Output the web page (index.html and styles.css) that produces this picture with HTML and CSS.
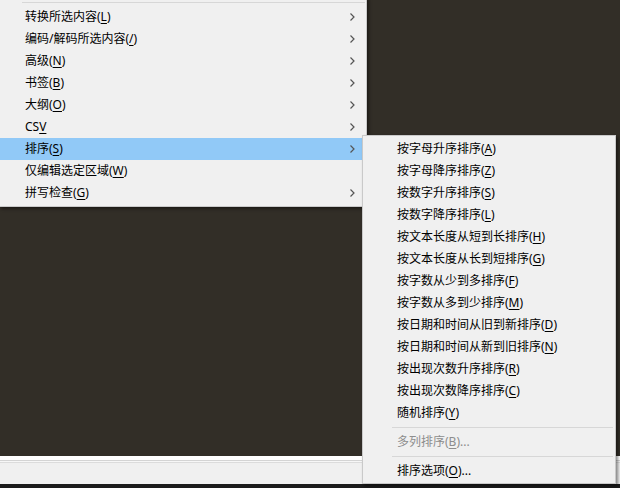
FILE: index.html
```html
<!DOCTYPE html>
<html lang="zh-CN">
<head>
<meta charset="utf-8">
<title>排序菜单</title>
<link rel="stylesheet" href="styles.css">
</head>
<body>
<div class="app">
  <div class="editor"></div>
  <div class="statusbar"></div>
  <div class="taskstrip"></div>
</div>

<div class="menu main-menu">
  <div class="sep sep-top"></div>
  <div class="item"><span>转换所选内容(<u>L</u>)</span><svg class="chev" width="5" height="8" viewBox="0 0 5 8"><path d="M0.5 0.5 L4 4 L0.5 7.5" fill="none" stroke="#555" stroke-width="1.2"/></svg></div>
  <div class="item"><span>编码/解码所选内容(<u>/</u>)</span><svg class="chev" width="5" height="8" viewBox="0 0 5 8"><path d="M0.5 0.5 L4 4 L0.5 7.5" fill="none" stroke="#555" stroke-width="1.2"/></svg></div>
  <div class="item"><span>高级(<u>N</u>)</span><svg class="chev" width="5" height="8" viewBox="0 0 5 8"><path d="M0.5 0.5 L4 4 L0.5 7.5" fill="none" stroke="#555" stroke-width="1.2"/></svg></div>
  <div class="item"><span>书签(<u>B</u>)</span><svg class="chev" width="5" height="8" viewBox="0 0 5 8"><path d="M0.5 0.5 L4 4 L0.5 7.5" fill="none" stroke="#555" stroke-width="1.2"/></svg></div>
  <div class="item"><span>大纲(<u>O</u>)</span><svg class="chev" width="5" height="8" viewBox="0 0 5 8"><path d="M0.5 0.5 L4 4 L0.5 7.5" fill="none" stroke="#555" stroke-width="1.2"/></svg></div>
  <div class="item"><span>CS<u>V</u></span><svg class="chev" width="5" height="8" viewBox="0 0 5 8"><path d="M0.5 0.5 L4 4 L0.5 7.5" fill="none" stroke="#555" stroke-width="1.2"/></svg></div>
  <div class="item active"><span>排序(<u>S</u>)</span><svg class="chev" width="5" height="8" viewBox="0 0 5 8"><path d="M0.5 0.5 L4 4 L0.5 7.5" fill="none" stroke="#555" stroke-width="1.2"/></svg></div>
  <div class="item"><span>仅编辑选定区域(<u>W</u>)</span></div>
  <div class="item"><span>拼写检查(<u>G</u>)</span><svg class="chev" width="5" height="8" viewBox="0 0 5 8"><path d="M0.5 0.5 L4 4 L0.5 7.5" fill="none" stroke="#555" stroke-width="1.2"/></svg></div>
</div>

<div class="menu sub-menu">
  <div class="item">按字母升序排序(<u>A</u>)</div>
  <div class="item">按字母降序排序(<u>Z</u>)</div>
  <div class="item">按数字升序排序(<u>S</u>)</div>
  <div class="item">按数字降序排序(<u>L</u>)</div>
  <div class="item">按文本长度从短到长排序(<u>H</u>)</div>
  <div class="item">按文本长度从长到短排序(<u>G</u>)</div>
  <div class="item">按字数从少到多排序(<u>F</u>)</div>
  <div class="item">按字数从多到少排序(<u>M</u>)</div>
  <div class="item">按日期和时间从旧到新排序(<u>D</u>)</div>
  <div class="item">按日期和时间从新到旧排序(<u>N</u>)</div>
  <div class="item">按出现次数升序排序(<u>R</u>)</div>
  <div class="item">按出现次数降序排序(<u>C</u>)</div>
  <div class="item">随机排序(<u>Y</u>)</div>
  <div class="sep"></div>
  <div class="item disabled">多列排序(<u>B</u>)...</div>
  <div class="sep"></div>
  <div class="item">排序选项(<u>O</u>)...</div>
</div>
</body>
</html>
```

FILE: styles.css
```css
* { box-sizing: border-box; }
html, body {
  margin: 0;
  padding: 0;
  width: 620px;
  height: 488px;
  overflow: hidden;
  background: #322e27;
  font-family: "Noto Sans", "Noto Sans CJK SC", sans-serif;
  font-size: 12px;
  color: #000;
}
.app {
  display: flex;
  flex-direction: column;
  height: 488px;
}
.editor {
  flex: 1;
  background: #322e27;
}
.statusbar {
  height: 28px;
  background: #f0f0f0;
  border-top: 4px solid #ffffff;
  box-shadow: inset 0 1px 0 #d4d4d4, inset 0 2px 0 #f7f7f7, inset 0 3px 0 #dcdcdc;
}
.taskstrip {
  height: 4px;
  background: #1c1c1c;
}
.menu {
  position: absolute;
  background: #f0f0f0;
  border: 1px solid #c9c9c9;
  box-shadow: 2px 2px 3px rgba(0, 0, 0, 0.45);
}
.main-menu {
  left: -1px;
  top: -3px;
  width: 368px;
  padding: 1px 0 2px 0;
}
.sep {
  height: 1px;
  background: #d7d7d7;
  margin: 3px 2px 3px 30px;
}
.main-menu .sep-top {
  margin: 3px 1px 3px 22px;
}
.item {
  height: 22px;
  line-height: 22px;
  white-space: nowrap;
}
.main-menu .item {
  display: flex;
  align-items: center;
  justify-content: space-between;
  padding: 0 11px 0 25px;
}
.main-menu .item.active {
  background: #91c9f7;
}
.chev {
  display: block;
}
.sub-menu {
  left: 362px;
  top: 135px;
  width: 254px;
  padding: 2px 0 1px 0;
}
.sub-menu .item {
  padding-left: 34px;
}
.sub-menu .sep {
  margin: 3px 2px 3px 29px;
}
.item.disabled {
  color: #8d8d8d;
}
u {
  text-decoration: underline;
  text-underline-offset: 2px;
}
```
